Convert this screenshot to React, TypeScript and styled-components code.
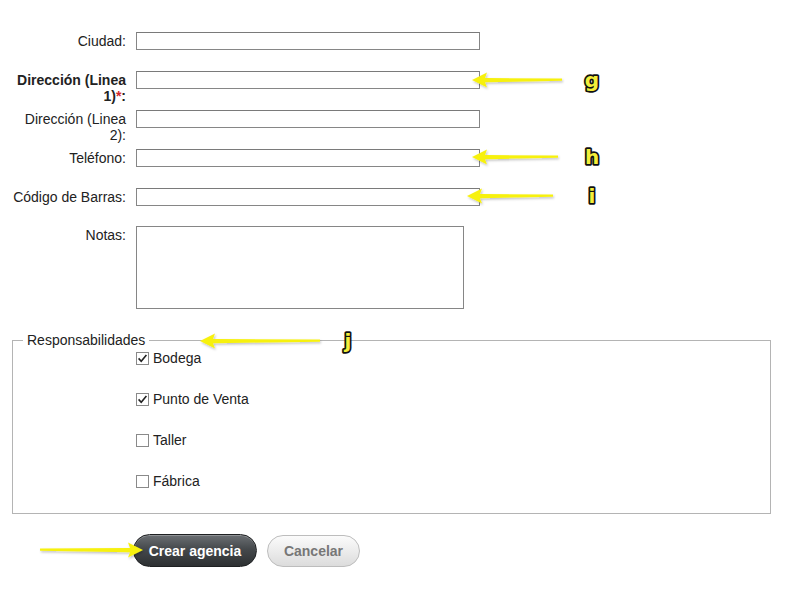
import React from "react"
import styled, { createGlobalStyle } from "styled-components"

const GlobalStyle = createGlobalStyle`
  body {
    margin: 0;
    background: #fff;
    font-family: "Liberation Sans", Arial, sans-serif;
    font-size: 14px;
    color: #222;
  }
`

const Page = styled.div`
  position: relative;
  width: 801px;
  height: 598px;
  overflow: hidden;
  padding-top: 32px;
  box-sizing: border-box;
`

const Row = styled.div<{ $height?: number }>`
  display: grid;
  grid-template-columns: 116px auto;
  column-gap: 10px;
  margin-left: 10px;
  height: ${(p) => (p.$height ? `${p.$height}px` : "auto")};
  align-items: start;
`

const Label = styled.label<{ $bold?: boolean }>`
  text-align: right;
  line-height: 16px;
  padding-top: 1px;
  font-weight: ${(p) => (p.$bold ? "bold" : "normal")};
  color: #222;
`

const Required = styled.span`
  color: #d2262b;
`

const TextInput = styled.input`
  width: 344px;
  height: 18px;
  box-sizing: border-box;
  margin: 0;
  padding: 0 2px;
  border: 1px solid #868686;
  border-top-color: #7a7a7a;
  background: #fff;
  font: inherit;
`

const Notes = styled.textarea`
  width: 328px;
  height: 83px;
  box-sizing: border-box;
  margin: 0;
  border: 1px solid #868686;
  resize: none;
  font: inherit;
`

const Fieldset = styled.fieldset`
  width: 759px;
  box-sizing: border-box;
  margin: 23px 0 0 12px;
  padding: 2px 10px 24px 10px;
  border: 1px solid #b4b4b4;
  min-inline-size: 0;
`

const Legend = styled.legend`
  padding: 0 4px;
  line-height: 16px;
  color: #222;
`

const CheckList = styled.div`
  display: flex;
  flex-direction: column;
  gap: 25px;
  margin-left: 113px;
`

const CheckRow = styled.label`
  display: flex;
  align-items: center;
  gap: 4px;
  height: 16px;
  line-height: 16px;
`

const Box = styled.span`
  width: 13px;
  height: 13px;
  box-sizing: border-box;
  border: 1px solid #8a8a8a;
  background: #fff;
  display: flex;
  align-items: center;
  justify-content: center;
`

const Buttons = styled.div`
  display: flex;
  align-items: center;
  gap: 10px;
  margin: 20px 0 0 133px;
`

const PrimaryButton = styled.button`
  height: 33px;
  width: 124px;
  border-radius: 17px;
  border: 1px solid #1e2022;
  background: linear-gradient(#6b6f73, #45494c 45%, #2d3032);
  box-shadow: inset 0 1px 0 rgba(255, 255, 255, 0.25);
  color: #fff;
  font: bold 14px "Liberation Sans", Arial, sans-serif;
  padding: 0;
`

const SecondaryButton = styled.button`
  height: 32px;
  width: 93px;
  border-radius: 16px;
  border: 1px solid #bdbdbd;
  background: linear-gradient(#fbfbfb, #ececec 50%, #dcdcdc);
  color: #777;
  font: bold 14px "Liberation Sans", Arial, sans-serif;
  padding: 0;
`

const Note = styled.div`
  position: absolute;
  pointer-events: none;
`

function Check({ checked }: { checked?: boolean }) {
  return (
    <Box>
      {checked && (
        <svg width="11" height="11" viewBox="0 0 11 11">
          <path d="M1.6 5.4 L4.2 8.2 L9.4 2" fill="none" stroke="#222" strokeWidth="1.6" />
        </svg>
      )}
    </Box>
  )
}

type AnnotationProps = {
  x: number
  y: number
  length: number
  dir: "left" | "right"
  letter?: string
  letterGap?: number
}

// yellow arrow + letter, as drawn over the screenshot
function Annotation({ x, y, length, dir, letter, letterGap = 23 }: AnnotationProps) {
  const w = length + (letter ? letterGap + 20 : 0)
  const pts =
    dir === "left"
      ? `0,9 15,1.5 13,7 ${length},7.6 ${length},9.8 13,11.2 15,16.5`
      : `${length},9 ${length - 15},1.5 ${length - 13},7 0,7.6 0,9.8 ${length - 13},11.2 ${length - 15},16.5`
  return (
    <Note style={{ left: x, top: y - 12 }}>
      <svg width={w} height="26" viewBox={`0 0 ${w} 26`} overflow="visible">
        <defs>
          <filter id={`sh${x}${y}`} x="-10%" y="-50%" width="120%" height="200%">
            <feDropShadow dx="1" dy="1.5" stdDeviation="1.2" floodColor="#000" floodOpacity="0.25" />
          </filter>
        </defs>
        <g transform="translate(0,3)" filter={`url(#sh${x}${y})`}>
          <polygon points={pts} fill="#f7f10f" />
        </g>
        {letter && (
          <text
            x={length + letterGap}
            y="19"
            fontFamily="'DejaVu Sans', sans-serif"
            fontWeight="bold"
            fontSize="20"
            fill="#f4ef3a"
            stroke="#111"
            strokeWidth="3.5"
            strokeLinejoin="round"
            paintOrder="stroke fill"
            textAnchor="middle"
          >
            {letter}
          </text>
        )}
      </svg>
    </Note>
  )
}

export default function App() {
  return (
    <Page>
      <GlobalStyle />
      <Row $height={39}>
        <Label>Ciudad:</Label>
        <TextInput />
      </Row>
      <Row $height={39}>
        <Label $bold>
          Dirección (Linea 1)<Required>*</Required>:
        </Label>
        <TextInput />
      </Row>
      <Row $height={39}>
        <Label>Dirección (Linea 2):</Label>
        <TextInput />
      </Row>
      <Row $height={39}>
        <Label>Teléfono:</Label>
        <TextInput />
      </Row>
      <Row $height={38}>
        <Label>Código de Barras:</Label>
        <TextInput />
      </Row>
      <Row>
        <Label>Notas:</Label>
        <Notes />
      </Row>

      <Fieldset>
        <Legend>Responsabilidades</Legend>
        <CheckList>
          <CheckRow>
            <Check checked />
            Bodega
          </CheckRow>
          <CheckRow>
            <Check checked />
            Punto de Venta
          </CheckRow>
          <CheckRow>
            <Check />
            Taller
          </CheckRow>
          <CheckRow>
            <Check />
            Fábrica
          </CheckRow>
        </CheckList>
      </Fieldset>

      <Buttons>
        <PrimaryButton>Crear agencia</PrimaryButton>
        <SecondaryButton>Cancelar</SecondaryButton>
      </Buttons>

      <Annotation x={472} y={80} length={90} dir="left" letter="g" letterGap={30} />
      <Annotation x={472} y={157} length={86} dir="left" letter="h" letterGap={34} />
      <Annotation x={467} y={196} length={86} dir="left" letter="i" letterGap={39} />
      <Annotation x={200} y={341} length={120} dir="left" letter="j" letterGap={28} />
      <Annotation x={40} y={550} length={103} dir="right" />
    </Page>
  )
}
